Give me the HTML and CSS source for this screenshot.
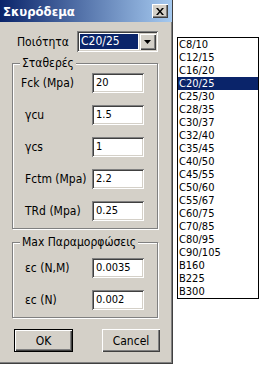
FILE: index.html
```html
<!DOCTYPE html>
<html lang="el">
<head>
    <meta charset="UTF-8">
    <title>Σκυρόδεμα</title>
    <link rel="stylesheet" href="styles.css">
</head>
<body>

<div class="dialog">
    <div class="titlebar">
        <span class="title">Σκυρόδεμα</span>
        <span class="close-btn">
            <svg width="8" height="7" viewBox="0 0 8 7"><path d="M0 0h2l2 2.5L6 0h2L5 3.5L8 7H6L4 4.5L2 7H0l3-3.5z" fill="#000"/></svg>
        </span>
    </div>

    <div class="content">
        <div class="quality-row">
            <label class="quality-label">Ποιότητα</label>
            <div class="combo">
                <div class="combo-value">C20/25</div>
                <div class="combo-btn">
                    <svg width="7" height="4" viewBox="0 0 7 4"><path d="M0 0h7L3.5 4z" fill="#000"/></svg>
                </div>
            </div>
        </div>

        <fieldset class="group group-const">
            <legend>Σταθερές</legend>
            <div class="row"><label class="lbl lbl-first">Fck (Mpa)</label><div class="edit">20</div></div>
            <div class="row"><label class="lbl">γcu</label><div class="edit">1.5</div></div>
            <div class="row"><label class="lbl">γcs</label><div class="edit">1</div></div>
            <div class="row"><label class="lbl">Fctm (Mpa)</label><div class="edit">2.2</div></div>
            <div class="row"><label class="lbl">TRd (Mpa)</label><div class="edit">0.25</div></div>
        </fieldset>

        <fieldset class="group group-strain">
            <legend>Max Παραμορφώσεις</legend>
            <div class="row"><label class="lbl">εc (N,M)</label><div class="edit">0.0035</div></div>
            <div class="row"><label class="lbl">εc (N)</label><div class="edit">0.002</div></div>
        </fieldset>

        <div class="buttons">
            <button type="button" class="btn btn-default">OK</button>
            <button type="button" class="btn btn-cancel">Cancel</button>
        </div>
    </div>
</div>

<ul class="dropdown-list">
    <li>C8/10</li>
    <li>C12/15</li>
    <li>C16/20</li>
    <li class="selected">C20/25</li>
    <li>C25/30</li>
    <li>C28/35</li>
    <li>C30/37</li>
    <li>C32/40</li>
    <li>C35/45</li>
    <li>C40/50</li>
    <li>C45/55</li>
    <li>C50/60</li>
    <li>C55/67</li>
    <li>C60/75</li>
    <li>C70/85</li>
    <li>C80/95</li>
    <li>C90/105</li>
    <li>B160</li>
    <li>B225</li>
    <li>B300</li>
</ul>

</body>
</html>
```

FILE: styles.css
```css
body {
    margin: 0;
    background: #fff;
    font-family: "DejaVu Sans Condensed", "DejaVu Sans", sans-serif;
    font-size: 12px;
    color: #000;
    display: flex;
    align-items: flex-start;
}
.dialog {
    width: 172px;
    height: 363px;
    background: #d4d0c8;
    border-right: 1px solid #404040;
    border-bottom: 1px solid #404040;
    box-shadow: inset -1px -1px 0 #808080;
}
.titlebar {
    height: 22px;
    padding: 0 4px 0 3px;
    background: linear-gradient(to right, #0a246a, #a6caf0);
    display: flex;
    align-items: center;
    justify-content: space-between;
}
.title {
    color: #fff;
    font-weight: bold;
    font-size: 13px;
}
.close-btn {
    width: 16px;
    height: 14px;
    background: #d4d0c8;
    box-shadow: inset 1px 1px 0 #fff, inset -1px -1px 0 #404040, inset -2px -2px 0 #808080;
    display: flex;
    align-items: center;
    justify-content: center;
}
.content {
    padding: 9px 0 0 12px;
}
.quality-row {
    display: flex;
    align-items: center;
    height: 21px;
}
.quality-label {
    width: 60px;
    padding-left: 5px;
}
.combo {
    width: 77px;
    height: 17px;
    padding: 2px;
    background: #fff;
    box-shadow: inset 1px 1px 0 #808080, inset -1px -1px 0 #fff, inset 2px 2px 0 #404040, inset -2px -2px 0 #d4d0c8;
    display: flex;
}
.combo-value {
    flex: 1;
    margin: 1px;
    padding-left: 1px;
    background: #0a246a;
    color: #fff;
    line-height: 15px;
}
.combo-btn {
    width: 17px;
    height: 17px;
    background: #d4d0c8;
    box-shadow: inset 1px 1px 0 #d4d0c8, inset 2px 2px 0 #fff, inset -1px -1px 0 #404040, inset -2px -2px 0 #808080;
    display: flex;
    align-items: center;
    justify-content: center;
}
.group {
    width: 144px;
    margin: 0;
    padding: 0;
    border: 1px solid #808080;
    box-shadow: 1px 1px 0 #fff, inset 1px 1px 0 #fff;
}
.group legend {
    margin-left: 7px;
    padding: 0 2px;
    line-height: 14px;
    background: #d4d0c8;
}
.group-const {
    margin-top: 4px;
    padding: 3px 0 7px;
}
.group-strain {
    margin-top: 6px;
    padding: 9px 0 7px;
}
.row {
    display: flex;
    align-items: center;
    height: 20px;
    margin-bottom: 12px;
}
.row:last-child {
    margin-bottom: 0;
}
.lbl {
    width: 67px;
    padding-left: 12px;
}
.lbl-first {
    width: 71px;
    padding-left: 8px;
}
.edit {
    width: 48px;
    height: 20px;
    padding-left: 4px;
    line-height: 20px;
    background: #fff;
    font-size: 11px;
    box-shadow: inset 1px 1px 0 #808080, inset -1px -1px 0 #fff, inset 2px 2px 0 #404040, inset -2px -2px 0 #d4d0c8;
}
.buttons {
    margin-top: 11px;
    display: flex;
}
.btn {
    height: 23px;
    padding: 0;
    border: none;
    background: #d4d0c8;
    font-family: inherit;
    font-size: 12px;
    color: #000;
    box-shadow: inset 1px 1px 0 #fff, inset -1px -1px 0 #404040, inset -2px -2px 0 #808080;
}
.btn-default {
    width: 59px;
    margin-left: 2px;
    border: 1px solid #000;
    box-shadow: inset 1px 1px 0 #fff, inset -1px -1px 0 #404040, inset -2px -2px 0 #808080;
}
.btn-cancel {
    width: 58px;
    margin-left: 29px;
}
.dropdown-list {
    list-style: none;
    margin: 37px 0 0 4px;
    padding: 0;
    width: 80px;
    border: 1px solid #000;
    background: #fff;
    font-size: 11px;
}
.dropdown-list li {
    height: 13px;
    line-height: 13px;
    padding-left: 1px;
}
.dropdown-list li.selected {
    background: #0a246a;
    color: #fff;
}
```
